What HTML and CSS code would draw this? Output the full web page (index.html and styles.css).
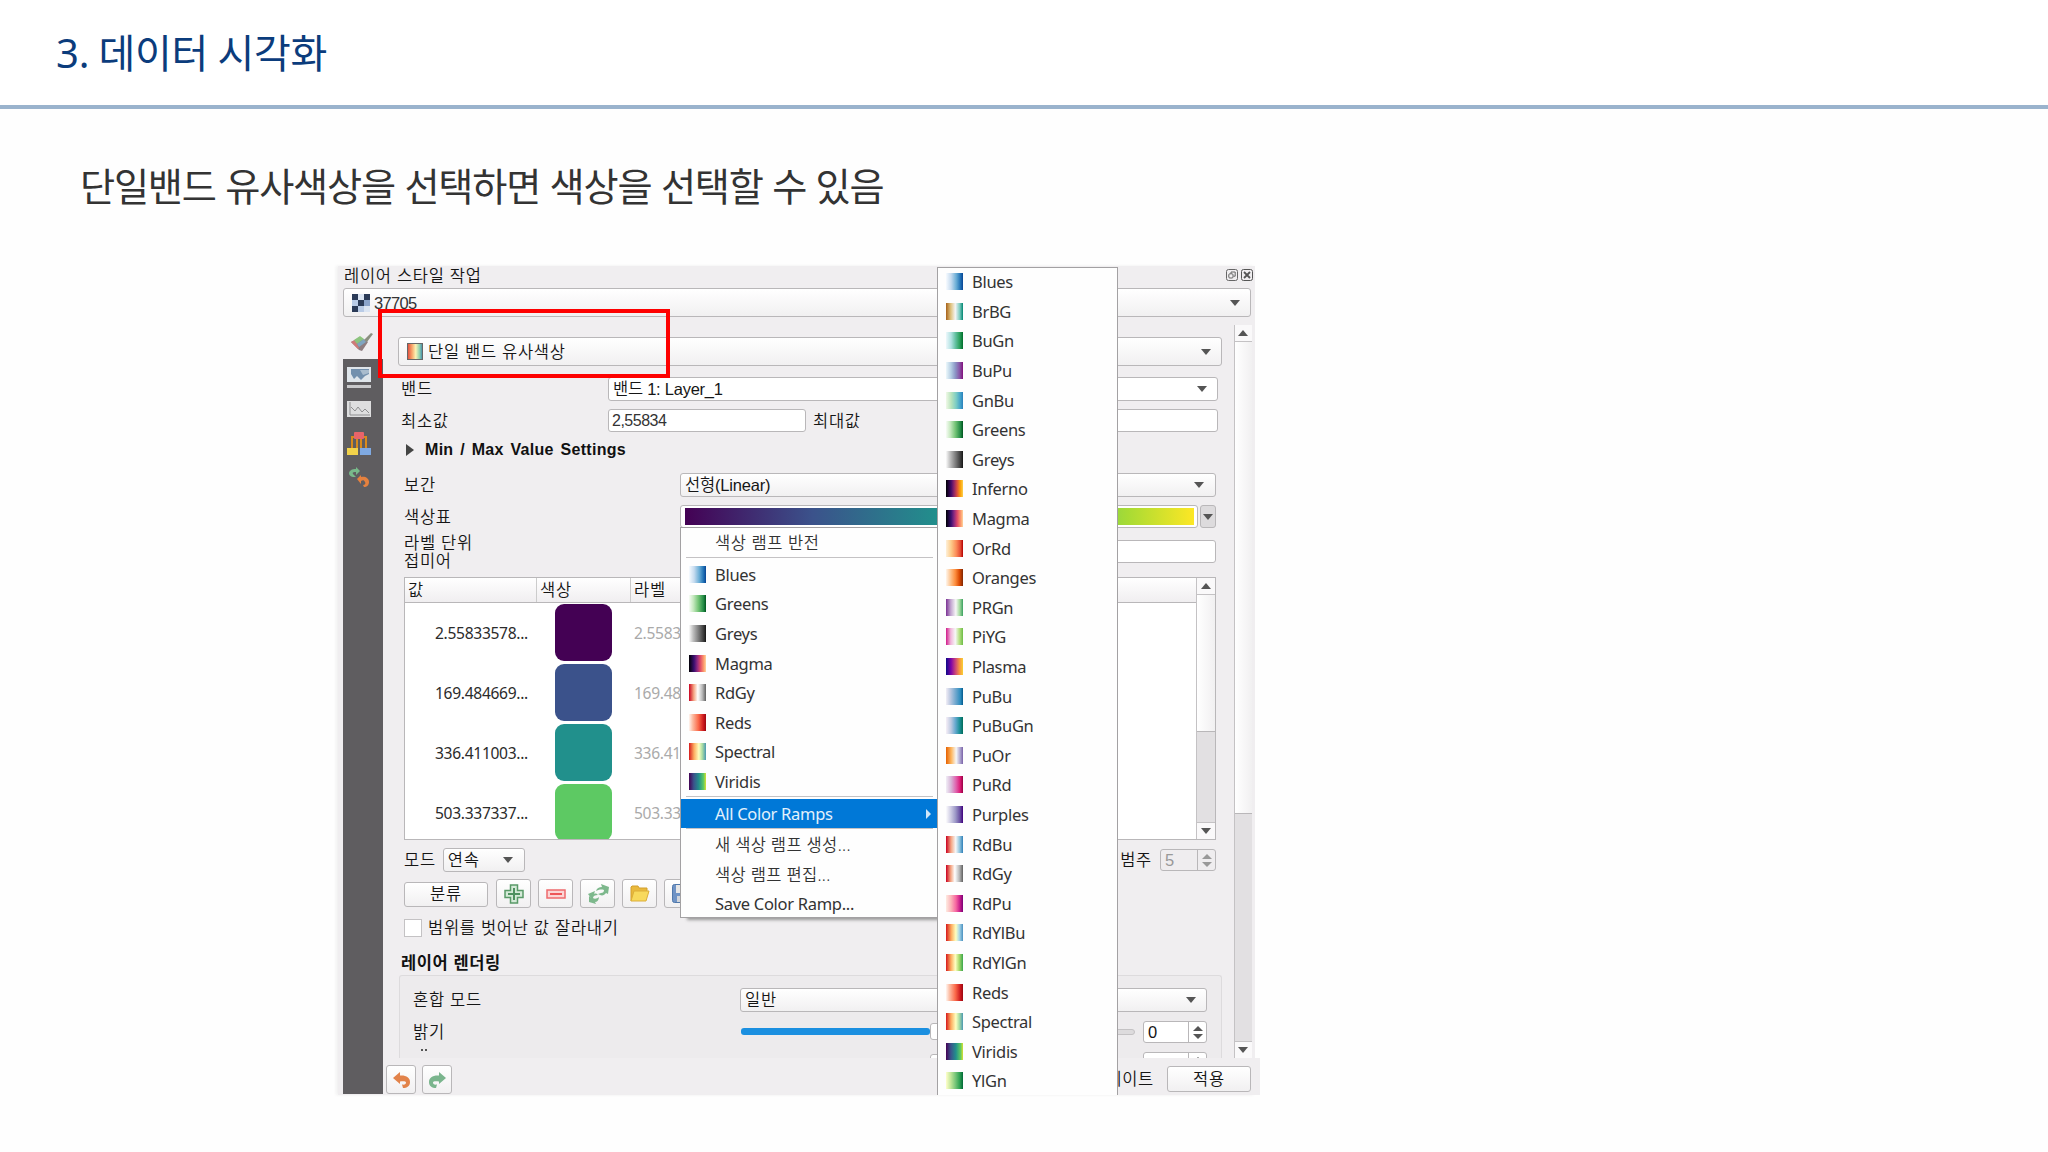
FILE: index.html
```html
<!DOCTYPE html>
<html lang="ko">
<head>
  <meta charset="UTF-8" />
  <meta name="viewport" content="width=device-width, initial-scale=1.0" />
  <title>3. 데이터 시각화</title>
  <link rel="stylesheet" href="styles.css">
</head>
<body>
  <header class="slide-header"><h1>3. 데이터 시각화</h1></header>
  <p class="lead">단일밴드 유사색상을 선택하면 색상을 선택할 수 있음</p>

  <div class="dock">
    <div class="dock-title">
      <span>레이어 스타일 작업</span>
      <div class="dock-buttons">
        <svg width="12" height="12" viewBox="0 0 12 12" fill="none" stroke="#666"><rect x=".5" y=".5" width="11" height="11" rx="2"/><rect x="2.8" y="4.8" width="4.2" height="4.2" rx="1"/><path d="M5 4.5V3h4.2v4.2H7.5"/></svg>
        <svg width="12" height="12" viewBox="0 0 12 12" fill="none" stroke="#555"><rect x=".5" y=".5" width="11" height="11" rx="2"/><path d="M3 3l6 6M9 3l-6 6" stroke-width="1.8"/></svg>
      </div>
    </div>

    <div class="combo layer-combo">
      <svg width="18" height="18" viewBox="0 0 18 18"><rect width="18" height="18" fill="#b9cbe6"/><path d="M0 0h6v6H0zM12 0h6v6h-6zM6 6h6v6H6zM0 12h6v6H0z" fill="#2b3b58"/><path d="M6 0h6v6H6zM12 12h6v6h-6z" fill="#dbe5f3"/><path d="M12 6h6v6h-6z" fill="#8ba4cb"/></svg>
      <span>37705</span><i class="arrow"></i>
    </div>

    <div class="dock-body">
      <div class="tabs">
        <div class="tab active">
          <svg width="24" height="20" viewBox="0 0 24 20"><path d="M1 10l9-5 8 5-6 9-3-1z" fill="#8d7d80"/><path d="M1 10l4-2 4 8-1 1z" fill="#d07a78"/><path d="M4 8l6-4 4 3-7 5z" fill="#8cc47e"/><path d="M7 12l7-5 2 3-7 5z" fill="#7fa5c0"/><path d="M14 8l7-7 2 1-6 8z" fill="#8a8f80"/></svg>
        </div>
        <div class="tab t1">
          <svg width="24" height="21" viewBox="0 0 24 21"><rect x="0" y="0" width="24" height="15" fill="#dfe5ea"/><path d="M4 2h18v5l-4 2-4 4-4-4-3 3-3-5z" fill="#7390ad"/><path d="M13 3h9v3l-6 2z" fill="#a9bccd"/><rect x="0" y="18" width="24" height="3" fill="#c9c9cb"/></svg>
        </div>
        <div class="tab t2">
          <svg width="24" height="16" viewBox="0 0 24 16"><rect width="24" height="16" fill="#dededf"/><path d="M3 1v13h20M4 6l4 4 3-4 4 5 3-3 4 4" fill="none" stroke="#8e8e90"/></svg>
        </div>
        <div class="tab t3">
          <svg width="24" height="24" viewBox="0 0 24 24"><path d="M5 17V5h4M19 17V5h-4M10 6v12M14 6v12" fill="none" stroke="#d98a1c" stroke-width="2"/><rect x="7" y="0" width="10" height="7" rx="1" fill="#e9646a"/><rect x="0" y="16" width="11" height="7" fill="#f2d24a"/><rect x="13" y="16" width="11" height="7" fill="#7fa9e2"/></svg>
        </div>
        <div class="tab t4">
          <svg width="20" height="20" viewBox="0 0 20 20"><path d="M7 10H4C0 9-1 6 1 4c2-2 4-2 6-2V0l4 4-4 4V5C5 5 3 5 4 7z" fill="#78b98a"/><path d="M8 12l4-4v2c4-1 8 1 8 5 0 3-2 5-5 5l-1-2c2 0 3-2 2-3-1-2-2-2-4-1v3z" fill="#e5813f"/></svg>
        </div>
      </div>

      <div class="content">
        <div class="combo renderer">
          <svg width="16" height="17" viewBox="0 0 16 17"><defs><linearGradient id="sp"><stop offset="0" stop-color="#e0483c"/><stop offset=".3" stop-color="#f7a66a"/><stop offset=".55" stop-color="#fbf3b4"/><stop offset=".8" stop-color="#8fcfae"/><stop offset="1" stop-color="#3e86a8"/></linearGradient></defs><rect x=".5" y=".5" width="15" height="16" fill="url(#sp)" stroke="#666"/></svg>
          <span>단일 밴드 유사색상</span><i class="arrow"></i>
        </div>

        <div class="row band"><label>밴드</label><div class="combo flat"><span>밴드 1: Layer_1</span><i class="arrow"></i></div></div>
        <div class="row minmax"><label>최소값</label><div class="field">2,55834</div><label class="max">최대값</label><div class="field grow"></div></div>
        <div class="row settings"><i class="expander"></i><b>Min / Max Value Settings</b></div>
        <div class="row interp"><label>보간</label><div class="combo"><span>선형(Linear)</span><i class="arrow"></i></div></div>
        <div class="row ramp"><label>색상표</label><div class="ramp-box"><div class="ramp-fill"></div></div><div class="ramp-drop"><i class="arrow"></i></div></div>
        <div class="row suffix"><label>라벨 단위<br>접미어</label><div class="field grow"></div></div>

        <div class="table">
          <div class="table-main">
            <div class="thead"><span class="c1">값</span><span class="c2">색상</span><span class="c3">라벨</span></div>
            <div class="tr"><span class="c1">2.55833578...</span><span class="c2"><i style="background:#440154"></i></span><span class="c3">2.5583</span></div>
            <div class="tr"><span class="c1">169.484669...</span><span class="c2"><i style="background:#3b528b"></i></span><span class="c3">169.48</span></div>
            <div class="tr"><span class="c1">336.411003...</span><span class="c2"><i style="background:#21908c"></i></span><span class="c3">336.41</span></div>
            <div class="tr"><span class="c1">503.337337...</span><span class="c2"><i style="background:#5dc963"></i></span><span class="c3">503.33</span></div>
          </div>
          <div class="scroll"><div class="sbtn"><i class="arrow up"></i></div><div class="thumb"></div><div class="trough"></div><div class="sbtn down"><i class="arrow"></i></div></div>
        </div>

        <div class="row mode"><label>모드</label><div class="combo"><span>연속</span><i class="arrow"></i></div><label class="classes">범주</label><div class="spin disabled"><span>5</span><em><i class="arrow up"></i><i class="arrow"></i></em></div></div>

        <div class="row tools">
          <div class="btn classify">분류</div>
          <div class="btn icon"><svg width="20" height="20" viewBox="0 0 20 20"><path d="M6.5 1h7v5.5H19v7h-5.500V19h-7v-5.500H1v-7h5.500z" fill="#d5ead8" stroke="#5a9a68" stroke-width="1.500"/><path d="M10 4v12M4 10h12" stroke="#4f9160" stroke-width="2"/></svg></div>
          <div class="btn icon"><svg width="20" height="10" viewBox="0 0 20 10"><rect x="1" y="1" width="18" height="8" fill="#fbd5d5" stroke="#ee6a6c" stroke-width="1.500"/><path d="M4 5h12" stroke="#ee5558" stroke-width="2"/></svg></div>
          <div class="btn icon"><svg width="22" height="20" viewBox="0 0 22 20" fill="#7db88c"><path d="M9 7c1-3 3-4 6-4l-1-3 8 3-1 7-2-1c-2 3-5 3-8 1l3-1c2 0 3-1 3-3-3-1-6 0-8 1z"/><path d="M1 10l7-3-1 3c2-1 3 0 4 1-3 0-5 1-5 3 1 1 4 1 6-1 0 3-2 5-4 5l1 2-7-2 0-6 2 2z"/></svg></div>
          <div class="btn icon"><svg width="20" height="17" viewBox="0 0 20 17"><path d="M1 16V2l1-1h6l1 2h8v4" fill="#e9b93c" stroke="#d3a02c"/><path d="M1 16L4 6h15l-3 10z" fill="#f8d95c" stroke="#dcae38"/></svg></div>
          <div class="btn icon"><svg width="19" height="19" viewBox="0 0 19 19"><rect x=".5" y=".5" width="18" height="18" rx="2" fill="#6f93c5" stroke="#5078ab"/><path d="M4 1h11v8H4z" fill="#e6e6e6"/><path d="M5 12h9v6H5z" fill="#d0d4da"/></svg></div>
        </div>

        <div class="row clip"><i class="checkbox"></i><label>범위를 벗어난 값 잘라내기</label></div>
        <div class="row section"><b>레이어 렌더링</b></div>
        <div class="group">
          <div class="row blend"><label>혼합 모드</label><div class="combo"><span>일반</span><i class="arrow"></i></div></div>
          <div class="row bright"><label>밝기</label><div class="slider"><div class="filled"></div><div class="handle"></div><div class="rest"></div></div><div class="spin"><span>0</span><em><i class="arrow up"></i><i class="arrow"></i></em></div></div>
          <div class="row bright cut"><label><i class="dots"></i></label><div class="slider"><div class="filled none"></div><div class="handle"></div><div class="rest"></div></div><div class="spin"><span></span><em><i class="arrow up"></i><i class="arrow"></i></em></div></div>
        </div>
      </div>

      <div class="scroll main-scroll"><div class="sbtn"><i class="arrow up"></i></div><div class="thumb"></div><div class="trough"></div><div class="sbtn down"><i class="arrow"></i></div></div>
    </div>

    <div class="dock-footer">
      <div class="btn icon"><svg width="17" height="16" viewBox="0 0 17 16"><path d="M0 6l7-6v3.500c6-.5 10 2 10 6.500 0 4-3 6-7 6l-1-3.500c3 .5 4-.5 4-2 0-1-2-1.500-6-1V12z" fill="#e2834a"/></svg></div>
      <div class="btn icon"><svg width="17" height="16" viewBox="0 0 17 16"><path d="M17 6l-7-6v3.500C4 3 0 5.500 0 10c0 4 3 6 7 6l1-3.500c-3 .5-4-.5-4-2 0-1 2-1.500 6-1V12z" fill="#7ab58d"/></svg></div>
      <span class="live">데이트</span>
      <div class="btn apply">적용</div>
    </div>

    <div class="menu menu-main">
      <div class="item head">색상 램프 반전</div>
      <hr>
      <div class="item"><i class="r-blues"></i>Blues</div>
      <div class="item"><i class="r-greens"></i>Greens</div>
      <div class="item"><i class="r-greys"></i>Greys</div>
      <div class="item"><i class="r-magma"></i>Magma</div>
      <div class="item"><i class="r-rdgy"></i>RdGy</div>
      <div class="item"><i class="r-reds"></i>Reds</div>
      <div class="item"><i class="r-spectral"></i>Spectral</div>
      <div class="item"><i class="r-viridis"></i>Viridis</div>
      <hr class="tight">
      <div class="item selected">All Color Ramps<b></b></div>
      <hr class="tight last">
      <div class="item plain ko">새 색상 램프 생성...</div>
      <div class="item plain ko">색상 램프 편집...</div>
      <div class="item plain">Save Color Ramp...</div>
    </div>

    <div class="menu menu-ramps">
      <div class="item"><i class="r-blues"></i>Blues</div>
      <div class="item"><i class="r-brbg"></i>BrBG</div>
      <div class="item"><i class="r-bugn"></i>BuGn</div>
      <div class="item"><i class="r-bupu"></i>BuPu</div>
      <div class="item"><i class="r-gnbu"></i>GnBu</div>
      <div class="item"><i class="r-greens"></i>Greens</div>
      <div class="item"><i class="r-greys"></i>Greys</div>
      <div class="item"><i class="r-inferno"></i>Inferno</div>
      <div class="item"><i class="r-magma"></i>Magma</div>
      <div class="item"><i class="r-orrd"></i>OrRd</div>
      <div class="item"><i class="r-oranges"></i>Oranges</div>
      <div class="item"><i class="r-prgn"></i>PRGn</div>
      <div class="item"><i class="r-piyg"></i>PiYG</div>
      <div class="item"><i class="r-plasma"></i>Plasma</div>
      <div class="item"><i class="r-pubu"></i>PuBu</div>
      <div class="item"><i class="r-pubugn"></i>PuBuGn</div>
      <div class="item"><i class="r-puor"></i>PuOr</div>
      <div class="item"><i class="r-purd"></i>PuRd</div>
      <div class="item"><i class="r-purples"></i>Purples</div>
      <div class="item"><i class="r-rdbu"></i>RdBu</div>
      <div class="item"><i class="r-rdgy"></i>RdGy</div>
      <div class="item"><i class="r-rdpu"></i>RdPu</div>
      <div class="item"><i class="r-rdylbu"></i>RdYlBu</div>
      <div class="item"><i class="r-rdylgn"></i>RdYlGn</div>
      <div class="item"><i class="r-reds"></i>Reds</div>
      <div class="item"><i class="r-spectral"></i>Spectral</div>
      <div class="item"><i class="r-viridis"></i>Viridis</div>
      <div class="item"><i class="r-ylgn"></i>YlGn</div>
    </div>

    <div class="callout"></div>
  </div>
</body>
</html>
```

FILE: styles.css
```css
* {
  box-sizing: border-box;
  margin: 0;
  padding: 0;
}

body {
  width: 2048px;
  height: 1152px;
  overflow: hidden;
  background: #fefefe;
  font-family: "Liberation Sans", "Noto Sans CJK KR", sans-serif;
  color: #151515;
}

i {
  font-style: normal;
}

.slide-header {
  height: 109px;
  padding-left: 56px;
  background: #fff;
  border-bottom: 4px solid #9ab3cd;
}

.slide-header h1 {
  font: 400 40px/105px "Noto Sans", "Noto Sans CJK KR", sans-serif;
  letter-spacing: -.2px;
  word-spacing: -1px;
  color: #0b3c7c;
}

.lead {
  height: 157px;
  padding-left: 80px;
  font: 400 38.2px/152px "Noto Sans CJK KR", sans-serif;
  letter-spacing: -1.2px;
  color: #333;
}

/* dock panel */
.dock {
  position: relative;
  width: 917px;
  height: 829px;
  margin-left: 338px;
  background: #f0eef0;
  box-shadow: -2px 0 3px #f0f0f0;
  font-size: 16.5px;
  font-weight: 350;
  letter-spacing: .7px;
  line-height: 20px;
  white-space: nowrap;
}

.dock b {
  font-weight: 700;
}

.dock-title {
  display: flex;
  justify-content: space-between;
  height: 22px;
  padding: 0 2px 0 6px;
}

.dock-title span {
  line-height: 20px;
}

.dock-buttons {
  display: flex;
  gap: 3px;
  padding-top: 3px;
}

.combo, .field, .btn, .spin, .ramp-box, .ramp-drop {
  display: flex;
  align-items: center;
  border: 1px solid #b9b7b9;
  border-radius: 3px;
  background: linear-gradient(#fff, #f1f0f1);
}

.combo {
  padding: 0 13px 0 4px;
}

.combo .arrow {
  margin-left: auto;
}

.combo.flat, .field, .spin {
  background: #fff;
}

.arrow {
  display: block;
  width: 0;
  height: 0;
  border: 5px solid transparent;
  border-top: 6px solid #555;
  border-bottom: 0;
}

.arrow.up {
  border-top: 0;
  border-bottom: 6px solid #555;
}

.layer-combo {
  width: 908px;
  height: 29px;
  margin-left: 5px;
  padding: 0 10px 0 8px;
  gap: 4px;
}

.layer-combo span {
  color: #333;
  letter-spacing: -.7px;
}

.dock-body {
  display: flex;
  height: 741px;
}

.tabs {
  width: 40px;
  height: 777px;
  margin-left: 5px;
  background: #5f5d60;
}

.tab {
  height: 42px;
  padding: 15px 0 0 7px;
  line-height: 0;
}

.tab.active {
  background: #f0eef0;
}

.tab.t1 {
  height: 34px;
  padding: 8px 0 0 4px;
}

.tab.t2 {
  height: 31px;
  padding: 8px 0 0 4px;
}

.tab.t3 {
  height: 32px;
  padding: 8px 0 0 4px;
}

.tab.t4 {
  padding: 11px 0 0 6px;
}

.content {
  width: 851px;
  height: 741px;
  overflow: hidden;
}

.row {
  display: flex;
  align-items: center;
}

.row label {
  flex: none;
}

.renderer {
  width: 824px;
  height: 29px;
  margin: 20px 0 0 15px;
  padding: 0 10px 0 8px;
  gap: 5px;
}

.band {
  margin: 11px 0 0 18px;
  height: 24px;
}

.band label, .minmax label {
  width: 207px;
}

.band .combo {
  width: 610px;
  height: 24px;
  padding-right: 10px;
}

.band .combo span {
  letter-spacing: -.25px;
}

.field {
  height: 23px;
  padding-left: 3px;
  font-size: 16px;
  letter-spacing: -.5px;
  color: #333;
}

.field.grow {
  flex: 1;
}

.minmax {
  width: 817px;
  height: 23px;
  margin: 8px 0 0 18px;
}

.minmax .field {
  width: 198px;
}

.minmax label.max {
  width: 150px;
  padding-left: 7px;
}

.minmax .field.grow {
  width: auto;
}

.settings {
  height: 20px;
  margin: 8px 0 -1px 23px;
  gap: 11px;
}

.settings b {
  font-size: 16px;
  letter-spacing: .3px;
  word-spacing: 2px;
  color: #111;
}

.expander {
  border: 6px solid transparent;
  border-left: 8px solid #444;
  border-right: 0;
}

.interp, .ramp, .suffix {
  width: 812px;
  margin-left: 21px;
}

.interp {
  height: 24px;
  margin-top: 14px;
}

.interp label, .ramp label, .suffix label {
  width: 276px;
}

.interp .combo {
  flex: 1;
  height: 24px;
  padding-right: 11px;
}

.interp .combo span {
  letter-spacing: -.2px;
}

.ramp {
  height: 23px;
  margin-top: 8px;
}

.ramp-box {
  width: 518px;
  height: 23px;
  padding: 2px 3px 3px 4px;
  background: #fff;
}

.ramp-fill {
  flex: 1;
  height: 17px;
  background: linear-gradient(90deg, #440154, #3b528b 25%, #21908c 50%, #5dc963 75%, #a8db34 87%, #fde725);
}

.ramp-drop {
  width: 16px;
  height: 23px;
  margin-left: 2px;
  padding-left: 2px;
  background: #dddbdd;
}

.suffix {
  height: 36px;
  margin-top: 6px;
}

.suffix .field {
  margin-top: -1px;
}

.suffix label {
  line-height: 18px;
}

/* class table */
.table {
  display: flex;
  width: 812px;
  height: 263px;
  margin: 7px 0 0 21px;
  border: 1px solid #b9b7b9;
  background: #fff;
}

.table-main {
  flex: 1;
  overflow: hidden;
}

.thead {
  display: flex;
  height: 25px;
  border-bottom: 1px solid #b9b7b9;
  background: linear-gradient(#fff, #f0eef0);
  line-height: 25px;
}

.c1 {
  width: 131px;
}

.c2 {
  width: 94px;
}

.thead span {
  padding-left: 3px;
}

.thead .c2, .thead .c3 {
  border-left: 1px solid #ccc;
}

.tr {
  display: flex;
  align-items: center;
  height: 60px;
  font: 400 15.6px "Noto Sans", sans-serif;
  letter-spacing: -.3px;
  color: #2b2b2b;
}

.tr .c1 {
  padding-right: 8px;
  text-align: right;
}

.tr .c2 i {
  display: block;
  width: 57px;
  height: 57px;
  margin: -2px 0 0 19px;
  border-radius: 9px;
}

.tr .c3 {
  padding-left: 4px;
  color: #aaa;
}

.scroll {
  display: flex;
  flex-direction: column;
  width: 19px;
  border-left: 1px solid #c4c2c4;
}

.sbtn {
  display: flex;
  align-items: center;
  justify-content: center;
  height: 17px;
  background: #faf9fa;
  border-bottom: 1px solid #c4c2c4;
}

.sbtn.down {
  border-bottom: 0;
  border-top: 1px solid #c4c2c4;
}

.thumb {
  height: 137px;
  background: linear-gradient(90deg, #fff, #f1f0f1);
  border-bottom: 1px solid #b9b7b9;
}

.trough {
  flex: 1;
  background: #e2e0e2;
}

.main-scroll {
  width: 18px;
  margin-top: 8px;
}

.main-scroll .sbtn {
  padding-right: 2px;
}

.main-scroll .thumb {
  height: 472px;
}

.mode {
  width: 812px;
  height: 24px;
  margin: 8px 0 0 21px;
}

.mode .combo {
  width: 82px;
  height: 24px;
  margin-left: 7px;
  padding-right: 11px;
}

.mode .classes {
  margin: 0 8px 0 auto;
}

.spin {
  height: 22px;
  overflow: hidden;
}

.spin span {
  flex: 1;
  padding-left: 4px;
}

.spin em {
  display: flex;
  flex-direction: column;
  align-items: center;
  justify-content: center;
  gap: 3px;
  width: 18px;
  height: 22px;
  border-left: 1px solid #b9b7b9;
}

.spin .arrow {
  border-width: 5px;
  border-bottom-width: 0;
}

.spin .arrow.up {
  border-top-width: 0;
  border-bottom-width: 5px;
}

.spin.disabled {
  width: 56px;
  background: #efedef;
  color: #999;
}

.spin.disabled .arrow {
  border-top-color: #999;
  border-bottom-color: #999;
}

.tools {
  height: 29px;
  margin: 7px 0 0 21px;
  gap: 7px;
}

.btn {
  justify-content: center;
}

.tools .classify {
  width: 84px;
  height: 25px;
  margin: 1px 1px 0 0;
}

.tools .icon {
  width: 35px;
  height: 29px;
}

.clip {
  height: 18px;
  margin: 11px 0 0 21px;
}

.checkbox {
  width: 18px;
  height: 18px;
  margin-right: 6px;
  border: 1px solid #c4c2c4;
  background: #fff;
}

.section {
  height: 20px;
  margin: 16px 0 -1px 18px;
}

.section b {
  font-size: 16.5px;
  letter-spacing: .6px;
  color: #111;
}

.group {
  width: 823px;
  height: 83px;
  margin: 3px 0 0 16px;
  padding: 12px 14px 0 13px;
  border: 1px solid #dddbdd;
  border-bottom: 0;
  border-radius: 3px 3px 0 0;
  background: #edebed;
  overflow: hidden;
}

.blend label {
  width: 327px;
}

.blend .combo {
  flex: 1;
  height: 24px;
  padding-right: 10px;
}

.bright {
  height: 22px;
  margin-top: 9px;
}

.bright label {
  width: 328px;
}

.bright.cut {
  margin-top: 9px;
}

.dots {
  display: block;
  width: 6px;
  height: 2px;
  margin: -14px 0 0 8px;
  border: 2px solid #555;
  border-width: 0 2px;
}

.slider {
  display: flex;
  align-items: center;
  width: 394px;
  margin-top: -1px;
}

.filled {
  width: 189px;
  height: 7px;
  border-radius: 3px;
  background: #1b8fe0;
}

.filled.none {
  background: none;
}

.handle {
  width: 16px;
  height: 17px;
  border: 1px solid #b9b7b9;
  border-radius: 3px;
  background: #fff;
}

.rest {
  flex: 1;
  height: 6px;
  border: 1px solid #c4c2c4;
  border-radius: 3px;
  background: #dddbdd;
}

.bright .spin {
  width: 64px;
  margin-left: auto;
}

.dock-footer {
  display: flex;
  align-items: flex-start;
  width: 877px;
  height: 37px;
  margin-left: 45px;
  padding: 7px 9px 0 3px;
  background: #f0eef0;
}

.dock-footer .icon {
  width: 30px;
  height: 29px;
  margin-right: 6px;
}

.dock-footer .live {
  margin: 4px 13px 0 auto;
}

.dock-footer .apply {
  width: 84px;
  height: 26px;
  margin-top: 1px;
}

/* popup menus */
.menu {
  position: absolute;
  background: #fefefe;
  border: 1px solid #a3a1a3;
  font: 400 16.5px "Noto Sans", "Noto Sans CJK KR", sans-serif;
  letter-spacing: -.3px;
  color: #333;
}

.menu-main {
  left: 342px;
  top: 261px;
  width: 258px;
  height: 391px;
  box-shadow: 5px 4px 3px -2px #999;
}

.menu-ramps {
  left: 599px;
  top: 1px;
  width: 181px;
  height: 828px;
  border-bottom: 0;
}

.item {
  display: flex;
  align-items: center;
  height: 29.6px;
  padding-left: 8px;
}

.menu-ramps .item:first-child {
  margin-top: -1px;
}

.item i {
  width: 17px;
  height: 17px;
  margin-right: 9px;
}

.item.head, .item.plain, .item.selected {
  padding-left: 34px;
}

.item.head {
  height: 28.6px;
  font-weight: 350;
  letter-spacing: .6px;
}

.item.ko {
  font-weight: 350;
  letter-spacing: .35px;
}

.menu hr {
  width: 247px;
  margin: 0 0 2px 5px;
  border: 0;
  border-top: 1px solid #c4c2c4;
}

.menu hr.tight {
  margin: 0 0 2px 5px;
}

.menu hr.last {
  margin-bottom: 0;
}

.item.selected {
  justify-content: space-between;
  height: 29px;
  padding-right: 6px;
  background: #0078d7;
  color: #e3f1fc;
}

.item.selected b {
  border: 5px solid transparent;
  border-left: 5px solid #cfe6fa;
  border-right: 0;
}

.callout {
  position: absolute;
  left: 40px;
  top: 43px;
  width: 292px;
  height: 69px;
  border: 4px solid #fe0000;
}

/* colour ramps */
.r-blues { background: linear-gradient(90deg, #f7fbff, #c6dbef 30%, #6baed6 60%, #2171b5 85%, #084594); }
.r-brbg { background: linear-gradient(90deg, #a6611a, #dfc27d 28%, #f5f5f5 55%, #80cdc1 80%, #018571); }
.r-bugn { background: linear-gradient(90deg, #edf8fb, #b2e2e2 30%, #66c2a4 55%, #2ca25f 80%, #006d2c); }
.r-bupu { background: linear-gradient(90deg, #edf8fb, #b3cde3 30%, #8c96c6 55%, #8856a7 80%, #810f7c); }
.r-gnbu { background: linear-gradient(90deg, #f0f9e8, #bae4bc 30%, #7bccc4 60%, #43a2ca 85%, #2a80ba); }
.r-greens { background: linear-gradient(90deg, #f7fcf5, #c7e9c0 25%, #74c476 55%, #238b45 85%, #00541f); }
.r-greys { background: linear-gradient(90deg, #fafafa, #bdbdbd 25%, #737373 60%, #252525 95%, #111); }
.r-inferno { background: linear-gradient(90deg, #000004, #420a68 30%, #932667 48%, #dd513a 66%, #fca50a 86%, #fcd050); }
.r-magma { background: linear-gradient(90deg, #000004, #3b0f70 30%, #8c2981 48%, #de4968 66%, #fe9f6d 88%, #fdd5a0); }
.r-orrd { background: linear-gradient(90deg, #fef0d9, #fdcc8a 30%, #fc8d59 60%, #e34a33 85%, #b30000); }
.r-oranges { background: linear-gradient(90deg, #fff5eb, #fdbe85 30%, #fd8d3c 55%, #d94801 80%, #7f2704); }
.r-prgn { background: linear-gradient(90deg, #7b3294, #c2a5cf 28%, #f7f7f7 58%, #a6dba0 80%, #3aa060); }
.r-piyg { background: linear-gradient(90deg, #d01c8b, #f1b6da 28%, #f7f7f7 55%, #b8e186 78%, #6dbc46); }
.r-plasma { background: linear-gradient(90deg, #0d0887, #7e03a8 30%, #cc4778 56%, #f89540 80%, #f8d032); }
.r-pubu { background: linear-gradient(90deg, #f1eef6, #bdc9e1 25%, #74a9cf 55%, #2b8cbe 85%, #045a8d); }
.r-pubugn { background: linear-gradient(90deg, #f6eff7, #bdc9e1 30%, #67a9cf 55%, #1c9099 80%, #016c59); }
.r-puor { background: linear-gradient(90deg, #e66101, #fdb863 32%, #f7f7f7 60%, #b2abd2 82%, #7a62a8); }
.r-purd { background: linear-gradient(90deg, #f1eef6, #d7b5d8 30%, #df65b0 58%, #dd1c77 83%, #980043); }
.r-purples { background: linear-gradient(90deg, #fcfbfd, #cbc9e2 30%, #9e9ac8 55%, #6a51a3 82%, #3f007d); }
.r-rdbu { background: linear-gradient(90deg, #ca0020, #f4a582 30%, #f7f7f7 57%, #92c5de 80%, #3080b8); }
.r-rdgy { background: linear-gradient(90deg, #ca0020, #f4a582 28%, #fff 52%, #bababa 78%, #606060); }
.r-rdpu { background: linear-gradient(90deg, #feebe2, #fbb4b9 30%, #f768a1 58%, #c51b8a 83%, #7a0177); }
.r-rdylbu { background: linear-gradient(90deg, #d7191c, #fdae61 32%, #ffffbf 58%, #abd9e9 78%, #4a90c0); }
.r-rdylgn { background: linear-gradient(90deg, #d7191c, #fdae61 30%, #ffffc0 55%, #a6d96a 78%, #3aa64c); }
.r-reds { background: linear-gradient(90deg, #fff5f0, #fcbba1 22%, #fb6a4a 55%, #cb181d 85%, #9a0811); }
.r-spectral { background: linear-gradient(90deg, #d7191c, #fdae61 30%, #ffffbf 58%, #abdda4 78%, #4a98b0); }
.r-viridis { background: linear-gradient(90deg, #440154, #3b528b 28%, #21908c 58%, #5dc963 85%, #d8e030); }
.r-ylgn { background: linear-gradient(90deg, #ffffcc, #c2e699 28%, #78c679 55%, #31a354 80%, #006837); }
```
